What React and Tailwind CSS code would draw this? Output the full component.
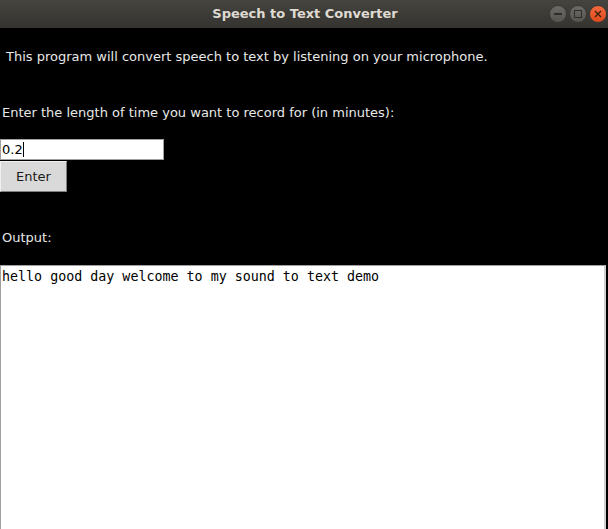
export default function App() {
  return (
    <div className="w-[608px] h-[529px] bg-black flex flex-col overflow-hidden" style={{ fontFamily: '"DejaVu Sans", sans-serif' }}>
      <div className="h-[28px] shrink-0 bg-gradient-to-b from-[#45443f] to-[#34332f] flex items-center relative">
        <div className="flex-1 text-center text-[13px] font-bold text-[#dfdbd2] pl-[2px]" style={{ fontFamily: '"DejaVu Sans", sans-serif' }}>Speech to Text Converter</div>
        <div className="absolute right-[1px] top-[5px] flex gap-[2px]">
          <div className="w-[18px] h-[18px] rounded-full bg-gradient-to-b from-[#6b6a66] to-[#55544f] border border-[#3a3935] flex items-center justify-center">
            <div className="w-[8px] h-[1.5px] bg-[#2f2e2b]" />
          </div>
          <div className="w-[18px] h-[18px] rounded-full bg-gradient-to-b from-[#6b6a66] to-[#55544f] border border-[#3a3935] flex items-center justify-center">
            <div className="w-[8px] h-[8px] border border-[#2f2e2b]" />
          </div>
          <div className="w-[18px] h-[18px] rounded-full bg-gradient-to-b from-[#f26a3c] to-[#df4a19] border border-[#3a3935] flex items-center justify-center">
            <svg width="8" height="8" viewBox="0 0 8 8"><path d="M1 1L7 7M7 1L1 7" stroke="#3a2010" strokeWidth="1.4" /></svg>
          </div>
        </div>
      </div>
      <div className="flex flex-col text-[13px] text-[#e8e8e8]">
        <div className="pl-[6px] mt-[20px] leading-[17px]">This program will convert speech to text by listening on your microphone.</div>
        <div className="pl-[2px] mt-[39px] leading-[17px]">Enter the length of time you want to record for (in minutes):</div>
        <div className="mt-[18px] w-[164px] h-[21px] bg-white border border-[#a0a0a0] flex items-center text-black pl-[1px] leading-none">
          0.2<span className="inline-block w-[1px] h-[15px] bg-black" />
        </div>
        <div className="mt-[1px] w-[67px] h-[31px] bg-[#d9d9d9] border border-t-[#f0f0f0] border-l-[#f0f0f0] border-r-[#808080] border-b-[#808080] flex items-center justify-center text-[#1a1a1a]">Enter</div>
        <div className="pl-[2px] mt-[37px] leading-[17px]">Output:</div>
      </div>
      <div className="mt-[19px] w-[606px] flex-1 bg-white border-t border-l border-r-2 border-t-[#a0a0a0] border-l-[#a0a0a0] border-r-[#d0d0d0] text-black text-[13.33px] pl-[1px] pt-[2px] leading-[17px]" style={{ fontFamily: '"DejaVu Sans Mono", monospace' }}>
        hello good day welcome to my sound to text demo
      </div>
    </div>
  );
}
